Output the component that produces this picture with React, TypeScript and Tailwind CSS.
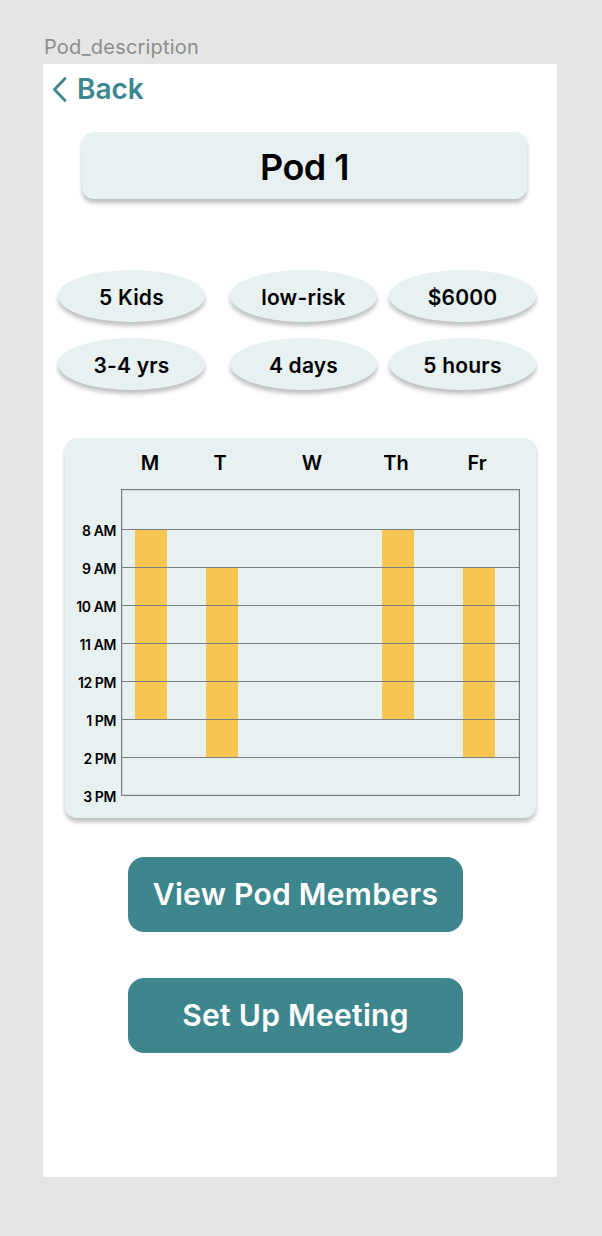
const pills = [
  ["5 Kids", "low-risk", "$6000"],
  ["3-4 yrs", "4 days", "5 hours"],
];

const days = [
  { label: "M", w: "w-[58px]" },
  { label: "T", w: "w-[82px]" },
  { label: "W", w: "w-[102px]" },
  { label: "Th", w: "w-[66px]" },
  { label: "Fr", w: "w-[96px]" },
];

const times = ["8 AM", "9 AM", "10 AM", "11 AM", "12 PM", "1 PM", "2 PM", "3 PM"];

// bars in grid pixel units: x offset, start/end hour index (0 = top line)
const bars = [
  { x: 14, from: 0, to: 5 },
  { x: 85, from: 1, to: 6 },
  { x: 261, from: 0, to: 5 },
  { x: 342, from: 1, to: 6 },
];

const lineY = (i: number) => 40 + i * 38;

const ScheduleChart = () => {
  return (
    <div className="mt-[48px] ml-[22px] w-[471px] h-[380px] rounded-[12px] bg-[#e8f1f2] shadow-[0_4px_4px_rgba(0,0,0,0.25)] pt-[13px]">
      <div className="flex ml-[56px] h-[24px] items-center">
        {days.map((d) => (
          <div key={d.label} className={`${d.w} text-center text-[20px] font-semibold text-black leading-[24px]`}>
            {d.label}
          </div>
        ))}
      </div>
      <div className="flex mt-[14px]">
        <div className="w-[56px] pr-[5px] pt-[22px] flex flex-col">
          {times.map((t) => (
            <div key={t} className="h-[38px] flex items-center justify-end text-[14px] font-semibold text-black tracking-[-0.4px]">
              {t}
            </div>
          ))}
        </div>
        <svg width="399" height="307" viewBox="0 0 399 307" className="block">
          {bars.map((b) => (
            <rect key={b.x} x={b.x} y={lineY(b.from)} width="32" height={lineY(b.to) - lineY(b.from)} fill="#f6c552" />
          ))}
          {[0, 1, 2, 3, 4, 5, 6].map((i) => (
            <line key={i} x1="0" x2="399" y1={lineY(i) + 0.5} y2={lineY(i) + 0.5} stroke="#7b7e80" strokeWidth="1.2" />
          ))}
          <rect x="0.6" y="0.6" width="397.8" height="305.8" fill="none" stroke="#7b7e80" strokeWidth="1.2" />
        </svg>
      </div>
    </div>
  );
};

export default function App() {
  return (
    <div className="min-h-[1236px] bg-[#e5e5e5] font-['Inter',sans-serif] pt-[35px]">
      <div className="pl-[44px] text-[20px] leading-[24px] tracking-[0.2px] text-[#8d8d8d]">Pod_description</div>
      <div className="mt-[5px] ml-[43px] w-[514px] h-[1113px] bg-white flex flex-col">
        {/* back link */}
        <div className="mt-[7px] h-[36px] flex items-center pl-[9px] text-[#3d868f]">
          <svg width="16" height="25" viewBox="0 0 16 25" fill="none">
            <polyline points="13,1.5 2.5,12.5 13,23.5" stroke="currentColor" strokeWidth="2.8" strokeLinecap="round" strokeLinejoin="round" />
          </svg>
          <span className="ml-[9px] text-[28px] font-semibold leading-none">Back</span>
        </div>

        <div className="mt-[25px] ml-[39px] w-[445px] h-[67px] rounded-[12px] bg-[#e8f1f2] shadow-[0_4px_4px_rgba(0,0,0,0.25)] flex items-center justify-center pt-[3px]">
          <span className="text-[36px] font-semibold text-black tracking-[-0.5px]">Pod 1</span>
        </div>

        {/* quick facts */}
        <div className="mt-[71px] flex flex-col gap-[16px] pl-[15px]">
          {pills.map((row, ri) => (
            <div key={ri} className="flex">
              {row.map((p, i) => (
                <div
                  key={p}
                  className={`${i === 1 ? "ml-[25px]" : i === 2 ? "ml-[12px]" : ""} w-[147px] h-[52px] rounded-[50%] bg-[#e8f1f2] shadow-[0_4px_4px_rgba(0,0,0,0.25)] flex items-center justify-center pt-[3px] text-[21px] font-semibold text-black tracking-[0.2px]`}
                >
                  {p}
                </div>
              ))}
            </div>
          ))}
        </div>

        <ScheduleChart />

        <button className="mt-[39px] ml-[85px] w-[335px] h-[75px] rounded-[16px] bg-[#3e868e] text-white text-[30px] font-semibold tracking-[0.3px]">
          View Pod Members
        </button>
        <button className="mt-[46px] ml-[85px] w-[335px] h-[75px] rounded-[16px] bg-[#3e868e] text-white text-[30px] font-semibold tracking-[0.3px]">
          Set Up Meeting
        </button>
      </div>
    </div>
  );
}
